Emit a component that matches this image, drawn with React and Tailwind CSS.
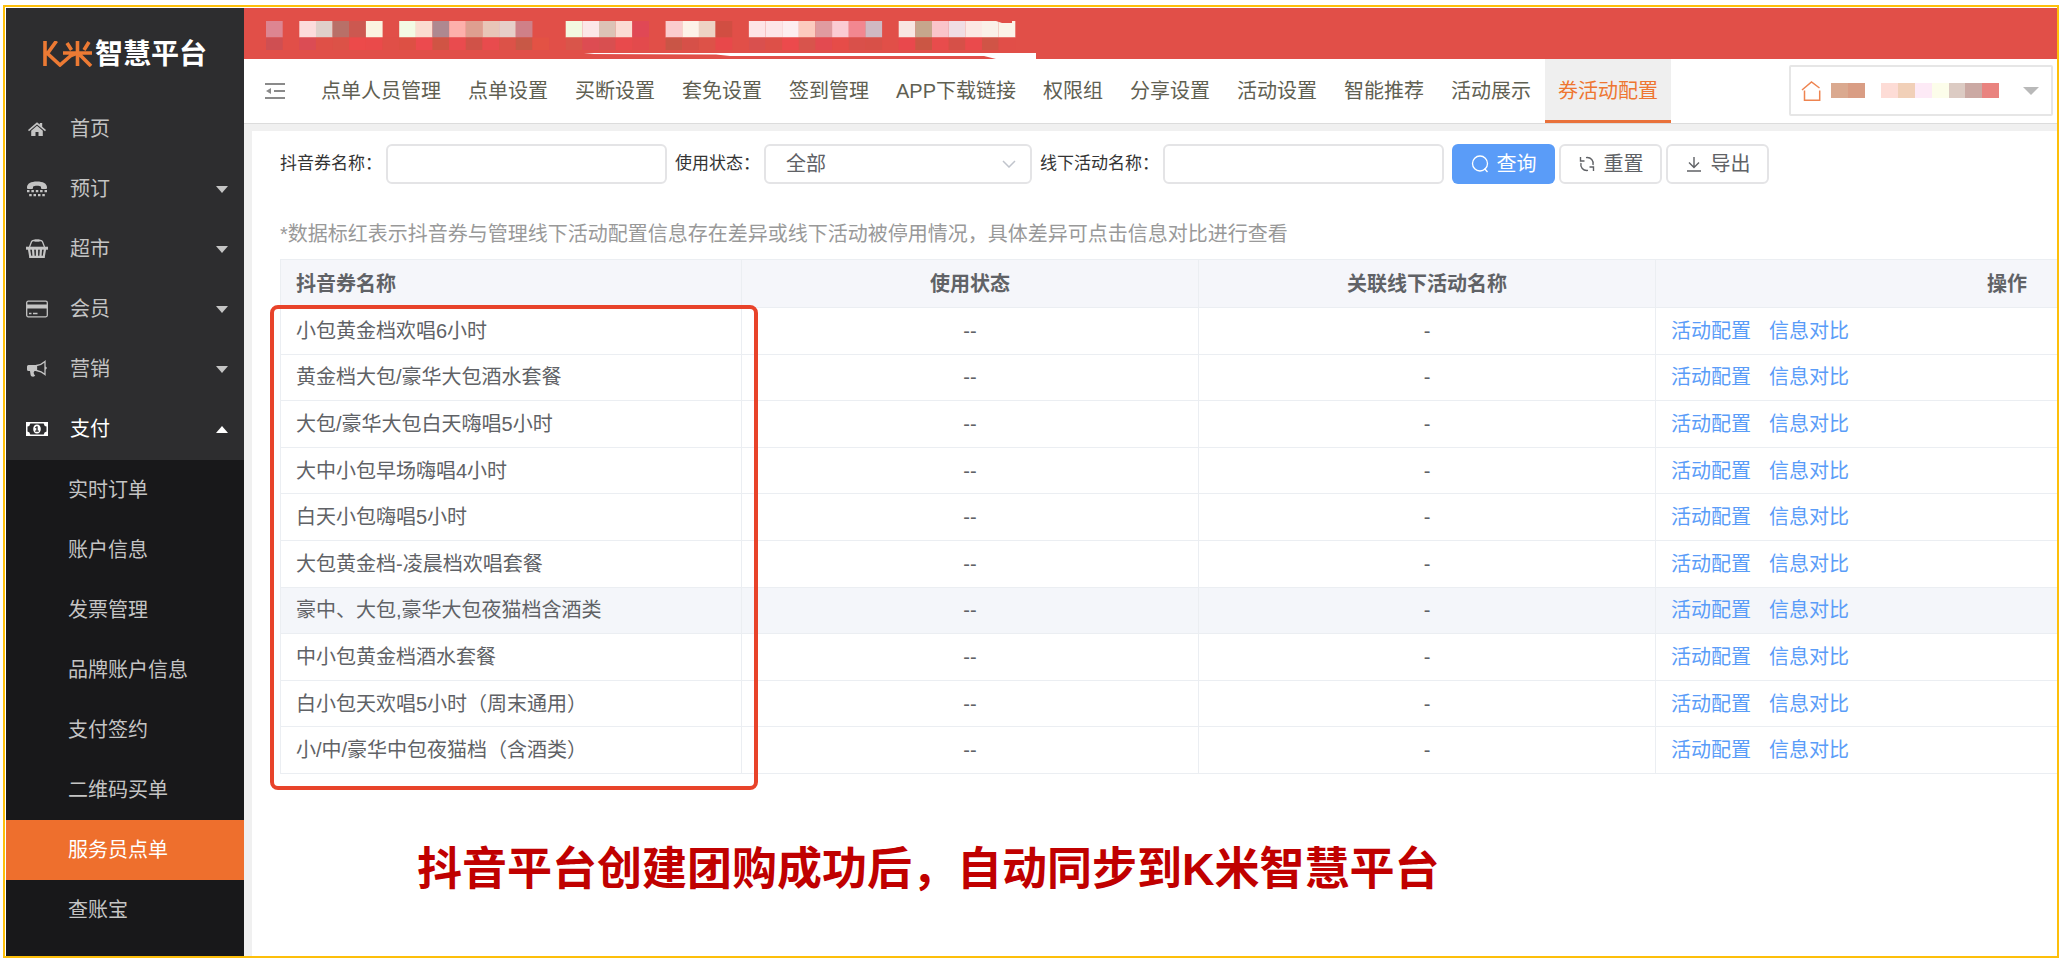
const MENU = [
  { label: "首页", icon: "home" },
  { label: "预订", icon: "tty", caret: true },
  { label: "超市", icon: "basket", caret: true },
  { label: "会员", icon: "card", caret: true },
  { label: "营销", icon: "horn", caret: true },
  { label: "支付", icon: "money", caret: true, open: true },
];

const SUBMENU = ["实时订单", "账户信息", "发票管理", "品牌账户信息", "支付签约", "二维码买单", "服务员点单", "查账宝"];

const TABS = [
  "点单人员管理", "点单设置", "买断设置", "套免设置", "签到管理", "APP下载链接",
  "权限组", "分享设置", "活动设置", "智能推荐", "活动展示", "券活动配置",
];

const ROWS = [
  "小包黄金档欢唱6小时",
  "黄金档大包/豪华大包酒水套餐",
  "大包/豪华大包白天嗨唱5小时",
  "大中小包早场嗨唱4小时",
  "白天小包嗨唱5小时",
  "大包黄金档-凌晨档欢唱套餐",
  "豪中、大包,豪华大包夜猫档含酒类",
  "中小包黄金档酒水套餐",
  "白小包天欢唱5小时（周末通用）",
  "小/中/豪华中包夜猫档（含酒类）",
];

const MOSAIC_TOP = [
  "#dd8591", "", "#fcdcdc", "#dfd0ca", "#b87068", "#cc5850", "#fbf3e0", "", "#f3fae4", "#fbdcd0", "#ae8890",
  "#fdb0ab", "#de9f90", "#e8c6b8", "#e6cfc9", "#cf8088", "", "", "#f2f9e0", "#fce7e8", "#dcc3b6", "#fbdcd4",
  "#e04855", "", "#fbccce", "#fdf2e8", "#edd3c4", "#d14e42", "", "#fee4e6", "#fde6e8", "#fdeef0", "#fccbbf",
  "#e09ba0", "#fbcbd3", "#f28790", "#cfb9c3", "", "#f8e6e2", "#c6a68c", "#fac4ca", "#f0dde4", "#fce8e4",
  "#faf0e8", "#fbf3e8",
];

const MOSAIC_BOTTOM = [
  "#cf4f52", "", "#db4c54", "#df5047", "#dc5247", "#ec4a4a", "#ea4a4a", "#e04f47", "#dd5044", "#ec4a4e", "#d05444",
  "#e94b4e", "#d05248", "#e84b4d", "#dc5248", "#c85846", "#e35244", "", "#d9554a", "#dd4c52", "#d84f50", "#e84a4c",
  "#e34a4c", "", "#c95546", "#d65048", "#dd5248", "#e8484a", "", "#d9504e", "#dd5048", "#ec4a4c", "#d8544c",
  "#e34a50", "#e64c48", "#d9504a", "#d85048", "", "#e9484c", "#cb5644", "#e84c4c", "#d65048", "#ea4a4c",
  "#d05446", "#e14e48",
];

const ICONS = {
  home: (
    <g fill="currentColor">
      <path d="M11 3.200 13.800 5.600V4h2.400v3.700L20 11l-1 1.300-8-6.900-8 6.900L2 11z" />
      <path d="m11 6.700 5.800 5V17h-4.300v-4h-3v4H5.200v-5.300z" />
    </g>
  ),
  tty: (
    <g fill="currentColor">
      <path d="M1 8.500C1 4.500 5 2.500 11 2.500s10 2 10 6V9a1 1 0 0 1-1 1h-4a1 1 0 0 1-1-1V7.700C14 7 12.800 6.700 11 6.700S8 7 7 7.700V9a1 1 0 0 1-1 1H2a1 1 0 0 1-1-1z" />
      <path d="M1 11h2.500v2.300H1zM5.400 11h2.500v2.300H5.400zM9.800 11h2.500v2.300H9.800zM14.100 11h2.500v2.300h-2.500zM18.500 11H21v2.300h-2.500zM3.200 15h2.500v2.300H3.200zM7.500 15H10v2.300H7.500zM12 15h2.500v2.300H12zM16.300 15h2.500v2.300h-2.500z" />
    </g>
  ),
  basket: (
    <g fill="none" stroke="currentColor">
      <path d="M3.500 8 5.500 2.800Q6 1.500 7.500 1.500h7Q16 1.500 16.500 2.800L18.500 8" strokeWidth="1.300" />
      <path d="M8.500 1.500h5" strokeWidth="2.200" />
      <path d="M0 9.200h22" strokeWidth="3" />
      <path d="M2.800 9 4.300 17.800h13.400L19.200 9M7 10l.6 8M11 10v8M15 10l-.6 8" strokeWidth="2.200" />
      <path d="M3.500 18h15" strokeWidth="1.600" />
    </g>
  ),
  card: (
    <g fill="none" stroke="currentColor">
      <rect x="0.700" y="2.200" width="20.600" height="15.600" rx="1.500" strokeWidth="1.300" />
      <path d="M1 7.500h20" strokeWidth="4" />
      <path d="M3 14.500h2.500M7 14.500h4.500" strokeWidth="1.300" />
    </g>
  ),
  horn: (
    <g>
      <path d="M1 7.500Q1 6 2.500 6H11v6H8.500Q7 13.500 8 15q.5 1 1.200 1.500Q8.500 18 6 17.500 4.800 17.300 4.600 16L4 12H2.500Q1 12 1 10.500z" fill="currentColor" />
      <path d="M10.500 6.500Q15.500 5.800 19 2.500v13Q15.500 12.200 10.500 11.500z" fill="none" stroke="currentColor" strokeWidth="1.300" />
      <path d="M19 7.500q1.800.3 1.800 1.600T19 10.700z" fill="currentColor" />
    </g>
  ),
  money: (
    <g>
      <path fillRule="evenodd" fill="currentColor" d="M0 3h22v14H0zM4.300 4.500Q4 7.200 1.500 7.500v5Q4 12.800 4.300 15.500h13.400q.3-2.700 2.800-3v-5Q18 7.200 17.700 4.500z" />
      <path fillRule="evenodd" fill="currentColor" d="M11 5.500c2.400 0 3.800 2 3.800 4.500s-1.400 4.500-3.800 4.500S7.200 12.500 7.200 10 8.600 5.500 11 5.500zM10.400 7.300 9 8.500l.6.8.7-.5v2.800H9.200v1.100h3.600v-1.100h-1.100V7.300z" />
    </g>
  ),
};

function Caret({ up, className }) {
  return (
    <svg viewBox="0 0 14 8" preserveAspectRatio="none" className={className} fill="currentColor" aria-hidden="true">
      <path d={up ? "M0 8 7 0l7 8z" : "M0 0h14L7 8z"} />
    </svg>
  );
}

function Sidebar() {
  return (
    <aside className="flex w-[238px] shrink-0 flex-col bg-[#2d2d2f] text-xl text-[#c4c4c4]">
      <div className="flex h-[92px] items-center justify-center gap-0.5 text-[28px] font-bold text-white">
        <svg viewBox="0 0 50 26" className="h-[26px] w-[50px]" fill="none" stroke="#ec7a34" strokeWidth="3.600" aria-hidden="true">
          <path d="M2 0v25M13.500 0 4.500 12.500 17 24l11-9.500 5-2M20 12h29M34.500 0v25M24 2l4.500 7M46 1l-5 8M36 13l12 12" />
        </svg>
        <span className="pt-0.5">智慧平台</span>
      </div>
      <nav className="flex flex-1 flex-col">
        {MENU.map((m) => (
          <a
            key={m.label}
            href="#"
            className={`flex h-[60px] items-center pr-4 pb-0.5 pl-5 ${m.open ? "text-white" : ""}`}
          >
            <svg viewBox="0 0 22 20" className="h-5 w-[22px]" aria-hidden="true">{ICONS[m.icon]}</svg>
            <span className="ml-[22px] flex-1">{m.label}</span>
            {m.caret && <Caret up={m.open} className="h-[7px] w-3" />}
          </a>
        ))}
        <div className="flex flex-1 flex-col bg-[#18181a]">
          {SUBMENU.map((s) => (
            <a
              key={s}
              href="#"
              className={`flex h-[60px] items-center pl-[62px] ${s === "服务员点单" ? "bg-[#ee6f2d] text-white" : ""}`}
            >
              {s}
            </a>
          ))}
        </div>
      </nav>
    </aside>
  );
}

function Banner() {
  return (
    <div className="h-[51px] overflow-hidden bg-[#e14f48]">
      <svg viewBox="0 0 800 51" className="h-[51px] w-[800px]" aria-hidden="true">
        {MOSAIC_TOP.map((c, i) => c && <rect key={i} x={22 + i * 16.65} y="13" width="16.7" height="16.5" fill={c} />)}
        {MOSAIC_BOTTOM.map((c, i) => c && <rect key={i} x={22 + i * 16.65} y="29.5" width="16.7" height="12.5" fill={c} />)}
        <path d="M752 13h16v2h-10z" fill="#e14f48" />
        <path d="M340 46l10-1h442v6h-40l-12-3H486l-14-1.500z" fill="#fff" />
      </svg>
    </div>
  );
}

function TopBar() {
  return (
    <div className="flex h-[65px] items-stretch border-b border-[#dcdcdc] bg-white text-xl text-[#5f6052]">
      <button type="button" aria-label="收起菜单" className="flex w-16 items-center pl-[21px]">
        <svg viewBox="0 0 20 18" className="h-[18px] w-5" fill="none" stroke="#8a8a8a" strokeWidth="2" aria-hidden="true">
          <path d="M0 2h20M9 9h11M0 16h20" />
          <path d="M1 9l5-3v6z" fill="#8a8a8a" stroke="none" />
        </svg>
      </button>
      <nav className="flex gap-px">
        {TABS.map((t) => (
          <a
            key={t}
            href="#"
            className={`flex items-center border-b-[3px] px-[13px] pt-[3px] whitespace-nowrap ${
              t === "券活动配置" ? "border-b-[#e9713a] bg-[#efefef] text-[#ee7631]" : "border-b-transparent"
            }`}
          >
            {t}
          </a>
        ))}
      </nav>
      <button
        type="button"
        aria-label="选择门店"
        className="mt-1.5 mr-1 ml-auto flex h-[51px] w-[264px] items-center rounded-xs border-2 border-[#e6e6e6] pr-3 pl-2.5"
      >
        <svg viewBox="0 0 20 20" className="h-5 w-5" fill="none" stroke="#ee8450" strokeWidth="1.500" aria-hidden="true">
          <path d="M1 9 10.500 1l8 6M3.500 9.500v9.700h15.200V9.500" />
        </svg>
        <svg viewBox="0 0 168 15" className="ml-2.5 h-[15px] w-[168px]" preserveAspectRatio="none" aria-hidden="true">
          <path d="M0 0h17v15H0z" fill="#daa98f" />
          <path d="M17 0h17v15H17z" fill="#d99d84" />
          <path d="M50 0h17v15H50z" fill="#fddcd6" />
          <path d="M67 0h17v15H67z" fill="#f1d0b8" />
          <path d="M84 0h17v15H84z" fill="#fdeaf6" />
          <path d="M101 0h17v15h-17z" fill="#fcfdea" />
          <path d="M118 0h17v15h-17z" fill="#dccbc3" />
          <path d="M134 0h17v15h-17z" fill="#cba9a3" />
          <path d="M151 0h17v15h-17z" fill="#e9837f" />
        </svg>
        <Caret className="ml-auto h-2 w-4 text-[#b9b9b9]" />
      </button>
    </div>
  );
}

const FIELD = "h-10 rounded-md border-2 border-[#e4e4e6] bg-white";
const BUTTON = "flex h-10 w-[103px] items-center justify-center gap-2 rounded-md";

function Filters() {
  return (
    <form className="flex items-center text-[17px] whitespace-nowrap text-[#333]">
      <label htmlFor="coupon">抖音券名称：</label>
      <input id="coupon" className={`${FIELD} ml-1 w-[281px] px-4`} />
      <label htmlFor="status" className="ml-2">使用状态：</label>
      <span className="relative ml-1">
        <select id="status" className={`${FIELD} w-[268px] appearance-none px-5 text-xl text-[#606266]`}>
          <option>全部</option>
        </select>
        <svg viewBox="0 0 14 8" className="pointer-events-none absolute top-4 right-4 h-2 w-3.5" fill="none" stroke="#c0c4cc" strokeWidth="1.500" aria-hidden="true">
          <path d="m1 1 6 6 6-6" />
        </svg>
      </span>
      <label htmlFor="offline" className="ml-2">线下活动名称：</label>
      <input id="offline" className={`${FIELD} ml-1 w-[281px] px-4`} />
      <div className="ml-2 flex gap-1 text-xl text-[#606266]">
        <button type="button" className={`${BUTTON} bg-[#5a9cf8] text-white`}>
          <svg viewBox="0 0 18 18" className="h-[18px] w-[18px]" fill="none" stroke="currentColor" strokeWidth="1.300" aria-hidden="true">
            <circle cx="9" cy="8.500" r="7.500" />
            <path d="m13.500 13.500 3 3.500" />
          </svg>
          查询
        </button>
        <button type="button" className={`${BUTTON} border-2 border-[#e4e4e6]`}>
          <svg viewBox="0 0 18 18" className="h-[18px] w-[18px]" fill="none" stroke="currentColor" strokeWidth="1.400" aria-hidden="true">
            <path d="M2.500 2v4h4M15.500 16v-4h-4M8 2.600c5-.8 8 3.400 7 7.400M10 15.400C5 16.200 2 12 3 8" />
          </svg>
          重置
        </button>
        <button type="button" className={`${BUTTON} border-2 border-[#e4e4e6]`}>
          <svg viewBox="0 0 18 18" className="h-[18px] w-[18px]" fill="none" stroke="currentColor" strokeWidth="1.400" aria-hidden="true">
            <path d="M9 2v10M4 7.500l5 5 5-5M2 16h14" />
          </svg>
          导出
        </button>
      </div>
    </form>
  );
}

function CouponTable() {
  const cell = "border border-[#ebeef2] px-[15px]";
  return (
    <div className="relative mt-[11px]">
      <div className="overflow-hidden">
        <table className="h-[515px] w-[2078px] table-fixed border-collapse text-xl text-[#606266]">
          <colgroup>
            <col className="w-[461px]" />
            <col className="w-[457px]" />
            <col className="w-[457px]" />
            <col className="w-[703px]" />
          </colgroup>
          <thead>
            <tr className="h-12 bg-[#f5f6fa]">
              <th className={`${cell} text-left`}>抖音券名称</th>
              <th className={cell}>使用状态</th>
              <th className={cell}>关联线下活动名称</th>
              <th className={cell}>操作</th>
            </tr>
          </thead>
          <tbody>
            {ROWS.map((r, i) => (
              <tr key={r} className={i === 6 ? "bg-[#f4f6fa]" : ""}>
                <td className={cell}>{r}</td>
                <td className={`${cell} text-center`}>--</td>
                <td className={`${cell} text-center`}>-</td>
                <td className={cell}>
                  <div className="flex gap-[18px] text-[#5a9cf8]">
                    <a href="#">活动配置</a>
                    <a href="#">信息对比</a>
                  </div>
                </td>
              </tr>
            ))}
          </tbody>
        </table>
      </div>
      <div className="pointer-events-none absolute top-[46px] -bottom-4 -left-2.5 w-[488px] rounded-lg border-4 border-[#e8432a]" />
    </div>
  );
}

export default function App() {
  return (
    <div className="min-h-screen bg-white py-[5px] pr-1.5 pl-[3px] font-['Liberation_Sans','Noto_Sans_CJK_SC',sans-serif]">
      <div className="flex min-h-[953px] overflow-hidden border-2 border-[#fdbf0a] pt-px pl-px">
        <Sidebar />
        <div className="flex min-w-0 flex-1 flex-col bg-[#f0f0f0]">
          <Banner />
          <TopBar />
          <main className="mt-[7px] ml-2 flex-1 bg-white pt-[13px] pl-7">
            <Filters />
            <p className="mt-9 text-xl text-[#999]">
              *数据标红表示抖音券与管理线下活动配置信息存在差异或线下活动被停用情况，具体差异可点击信息对比进行查看
            </p>
            <CouponTable />
            <p className="mt-[62px] pl-[137px] text-[45px] font-bold text-[#c00000]">
              抖音平台创建团购成功后，自动同步到K米智慧平台
            </p>
          </main>
        </div>
      </div>
    </div>
  );
}
